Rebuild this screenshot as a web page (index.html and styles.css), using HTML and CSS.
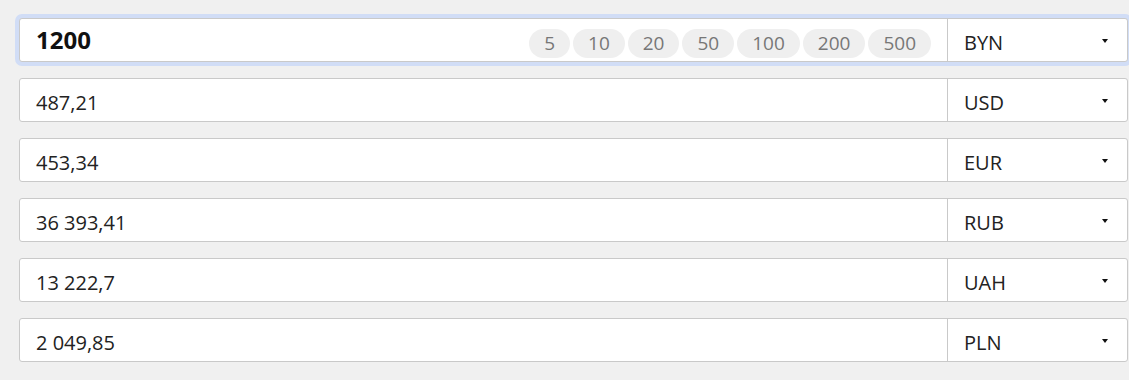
FILE: index.html
```html
<!DOCTYPE html>
<html lang="ru">
<head>
    <meta charset="UTF-8">
    <meta name="viewport" content="width=device-width, initial-scale=1.0">
    <title>Конвертер валют</title>
    <link rel="stylesheet" href="styles.css">
</head>
<body>
    <div class="converter">
        <div class="row row-active">
            <div class="amount amount-main">
                <span class="value">1200</span>
                <div class="presets">
                    <span class="preset">5</span>
                    <span class="preset">10</span>
                    <span class="preset">20</span>
                    <span class="preset">50</span>
                    <span class="preset">100</span>
                    <span class="preset">200</span>
                    <span class="preset">500</span>
                </div>
            </div>
            <div class="currency"><span>BYN</span><i class="arrow"></i></div>
        </div>
        <div class="row">
            <div class="amount"><span class="value">487,21</span></div>
            <div class="currency"><span>USD</span><i class="arrow"></i></div>
        </div>
        <div class="row">
            <div class="amount"><span class="value">453,34</span></div>
            <div class="currency"><span>EUR</span><i class="arrow"></i></div>
        </div>
        <div class="row">
            <div class="amount"><span class="value">36 393,41</span></div>
            <div class="currency"><span>RUB</span><i class="arrow"></i></div>
        </div>
        <div class="row">
            <div class="amount"><span class="value">13 222,7</span></div>
            <div class="currency"><span>UAH</span><i class="arrow"></i></div>
        </div>
        <div class="row">
            <div class="amount"><span class="value">2 049,85</span></div>
            <div class="currency"><span>PLN</span><i class="arrow"></i></div>
        </div>
    </div>
</body>
</html>
```

FILE: styles.css
```css
* {
    margin: 0;
    padding: 0;
    box-sizing: border-box;
}

body {
    background: #f0f0f0;
    font-family: 'Open Sans', sans-serif;
    color: #222;
    overflow: hidden;
}

.converter {
    padding: 18px 1px 0 19px;
}

.row {
    display: flex;
    height: 44px;
    margin-bottom: 16px;
    background: #fff;
    border: 1px solid #c9c9c9;
    border-radius: 3px;
}

.row-active {
    box-shadow: 0 0 0 4px #d1ddf6;
}

.amount {
    flex: 1;
    display: flex;
    align-items: center;
    padding: 5px 16px 0 16px;
    font-size: 20px;
}

.amount-main {
    padding-top: 0;
    padding-bottom: 2px;
}

.amount-main .value {
    font-size: 24px;
    font-weight: bold;
    color: #111;
}

.presets {
    margin-left: auto;
    display: flex;
    gap: 3px;
    padding-top: 9px;
}

.preset {
    display: block;
    height: 29px;
    line-height: 29px;
    padding: 0 15px;
    border-radius: 15px;
    background: #efefef;
    color: #777;
    font-size: 19px;
}

.currency {
    width: 180px;
    display: flex;
    align-items: center;
    justify-content: space-between;
    padding: 5px 19px 0 16px;
    border-left: 1px solid #c9c9c9;
    font-size: 20px;
}

.arrow {
    width: 0;
    height: 0;
    border-left: 3px solid transparent;
    border-right: 3px solid transparent;
    border-top: 4px solid #111;
    margin-top: -4px;
}
```
